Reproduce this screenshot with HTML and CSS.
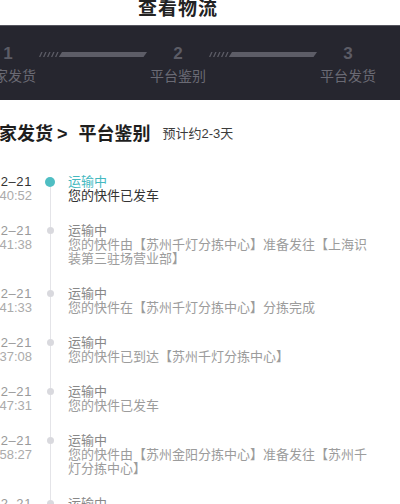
FILE: index.html
```html
<!DOCTYPE html>
<html lang="zh-CN">
<head>
<meta charset="utf-8">
<title>查看物流</title>
<link rel="stylesheet" href="styles.css">
</head>
<body>
<div class="page">
  <header class="topbar"><h1 class="title">查看物流</h1></header>

  <section class="steps">
    <div class="steps-grid">
      <span class="step-num">1</span>
      <svg class="bar" width="108" height="5" viewBox="0 0 108 5"><path d="M2.2 0h1.4L1.4 5H0z M6.2 0h1.4L5.4 5H4z M10.2 0h1.4L9.4 5H8z M14.2 0h1.4L13.4 5H12z M18.2 0h1.4L17.4 5H16z" fill="#5b5b65"/><path d="M23 0H108L104.5 5H19.8z" fill="#5d5d67"/></svg>
      <span class="step-num">2</span>
      <svg class="bar" width="108" height="5" viewBox="0 0 108 5"><path d="M2.2 0h1.4L1.4 5H0z M6.2 0h1.4L5.4 5H4z M10.2 0h1.4L9.4 5H8z M14.2 0h1.4L13.4 5H12z M18.2 0h1.4L17.4 5H16z" fill="#5b5b65"/><path d="M23 0H108L104.5 5H19.8z" fill="#5d5d67"/></svg>
      <span class="step-num">3</span>
      <span class="step-label">卖家发货</span>
      <span></span>
      <span class="step-label">平台鉴别</span>
      <span></span>
      <span class="step-label">平台发货</span>
    </div>
  </section>

  <div class="route"><span class="route-main">卖家发货</span><span class="route-main route-sep">&gt;</span><span class="route-main">平台鉴别</span><span class="route-eta">预计约2-3天</span></div>

  <ol class="timeline">
    <li class="tl-item current">
      <div class="tl-time"><span class="date">02–21</span><span class="clock">10:40:52</span></div>
      <div class="tl-axis"><span class="seg-top"></span><span class="dot"></span><span class="seg-bottom"></span></div>
      <div class="tl-body"><p class="tl-status">运输中</p><p class="tl-desc">您的快件已发车</p></div>
    </li>
    <li class="tl-item">
      <div class="tl-time"><span class="date">02–21</span><span class="clock">08:41:38</span></div>
      <div class="tl-axis"><span class="seg-top"></span><span class="dot"></span><span class="seg-bottom"></span></div>
      <div class="tl-body"><p class="tl-status">运输中</p><p class="tl-desc">您的快件由【苏州千灯分拣中心】准备发往【上海识装第三驻场营业部】</p></div>
    </li>
    <li class="tl-item">
      <div class="tl-time"><span class="date">02–21</span><span class="clock">07:41:33</span></div>
      <div class="tl-axis"><span class="seg-top"></span><span class="dot"></span><span class="seg-bottom"></span></div>
      <div class="tl-body"><p class="tl-status">运输中</p><p class="tl-desc">您的快件在【苏州千灯分拣中心】分拣完成</p></div>
    </li>
    <li class="tl-item">
      <div class="tl-time"><span class="date">02–21</span><span class="clock">06:37:08</span></div>
      <div class="tl-axis"><span class="seg-top"></span><span class="dot"></span><span class="seg-bottom"></span></div>
      <div class="tl-body"><p class="tl-status">运输中</p><p class="tl-desc">您的快件已到达【苏州千灯分拣中心】</p></div>
    </li>
    <li class="tl-item">
      <div class="tl-time"><span class="date">02–21</span><span class="clock">03:47:31</span></div>
      <div class="tl-axis"><span class="seg-top"></span><span class="dot"></span><span class="seg-bottom"></span></div>
      <div class="tl-body"><p class="tl-status">运输中</p><p class="tl-desc">您的快件已发车</p></div>
    </li>
    <li class="tl-item">
      <div class="tl-time"><span class="date">02–21</span><span class="clock">01:58:27</span></div>
      <div class="tl-axis"><span class="seg-top"></span><span class="dot"></span><span class="seg-bottom"></span></div>
      <div class="tl-body"><p class="tl-status">运输中</p><p class="tl-desc">您的快件由【苏州金阳分拣中心】准备发往【苏州千灯分拣中心】</p></div>
    </li>
    <li class="tl-item">
      <div class="tl-time"><span class="date">02–21</span><span class="clock">00:12:45</span></div>
      <div class="tl-axis"><span class="seg-top"></span><span class="dot"></span><span class="seg-bottom"></span></div>
      <div class="tl-body"><p class="tl-status">运输中</p><p class="tl-desc">您的快件已到达【苏州金阳分拣中心】</p></div>
    </li>
  </ol>
</div>
</body>
</html>
```

FILE: styles.css
```css
* { box-sizing: border-box; }

html, body {
  margin: 0;
  padding: 0;
  background: #ffffff;
}

body {
  width: 400px;
  height: 504px;
  overflow: hidden;
  font-family: "Liberation Sans", "Noto Sans CJK SC", sans-serif;
}

.page {
  width: 400px;
}

/* top title */
.topbar {
  height: 25px;
  padding-right: 44px;
  display: flex;
  justify-content: center;
  align-items: flex-start;
}

.title {
  margin: 0;
  font-size: 19px;
  line-height: 18px;
  letter-spacing: 1px;
  font-weight: 700;
  color: #222222;
}

/* steps band */
.steps {
  background: #26262f;
  border-top: 1px solid #55555e;
  padding: 18px 0 15px;
}

.steps-grid {
  display: grid;
  grid-template-columns: 56px 108px 56px 108px 56px;
  grid-template-rows: 20px 18px;
  column-gap: 3px;
  row-gap: 3px;
  margin-left: -20px;
  width: 396px;
}

.step-num {
  text-align: center;
  font-size: 17px;
  line-height: 20px;
  font-weight: 700;
  color: #5c5c66;
}

.bar {
  display: block;
  align-self: center;
}

.step-label {
  text-align: center;
  font-size: 14px;
  line-height: 18px;
  color: #6a6a74;
  white-space: nowrap;
}

/* route heading */
.route {
  padding-top: 22px;
  margin-left: -19px;
  font-size: 18px;
  line-height: 24px;
  white-space: nowrap;
}

.route-main {
  font-weight: 700;
  color: #1e1e1e;
}

.route-sep {
  margin: 0 11px 0 4px;
}

.route-eta {
  margin-left: 12px;
  font-size: 13px;
  color: #3c3c3c;
  vertical-align: 2px;
}

/* timeline */
.timeline {
  list-style: none;
  margin: 0;
  padding: 29px 0 0;
}

.tl-item {
  display: flex;
}

.tl-time {
  flex: none;
  width: 60px;
  margin-left: -28px;
  display: flex;
  flex-direction: column;
  align-items: flex-end;
  font-size: 13px;
  line-height: 14px;
  white-space: nowrap;
}

.date {
  color: #9a9a9a;
  letter-spacing: 0.6px;
}

.clock {
  color: #ababab;
}

.tl-axis {
  flex: none;
  width: 36px;
  display: flex;
  flex-direction: column;
  align-items: center;
}

.seg-top {
  flex: none;
  width: 1px;
  height: 3px;
  background: #e4e4e8;
}

.dot {
  flex: none;
  width: 7px;
  height: 7px;
  border-radius: 50%;
  background: #d9d9de;
}

.seg-bottom {
  flex: 1;
  width: 1px;
  background: #e4e4e8;
}

.tl-body {
  flex: none;
  width: 306px;
  padding-bottom: 21px;
  font-size: 13px;
  line-height: 14px;
}

.tl-status {
  margin: 0;
  color: #888888;
}

.tl-desc {
  margin: 0;
  color: #9c9c9c;
}

.current .seg-top {
  height: 2px;
  background: transparent;
}

.current .dot {
  width: 10px;
  height: 10px;
  background: #4fbec3;
}

.current .date {
  color: #333333;
}

.current .tl-status {
  color: #45b9bf;
}

.current .tl-desc {
  color: #333333;
}
```
